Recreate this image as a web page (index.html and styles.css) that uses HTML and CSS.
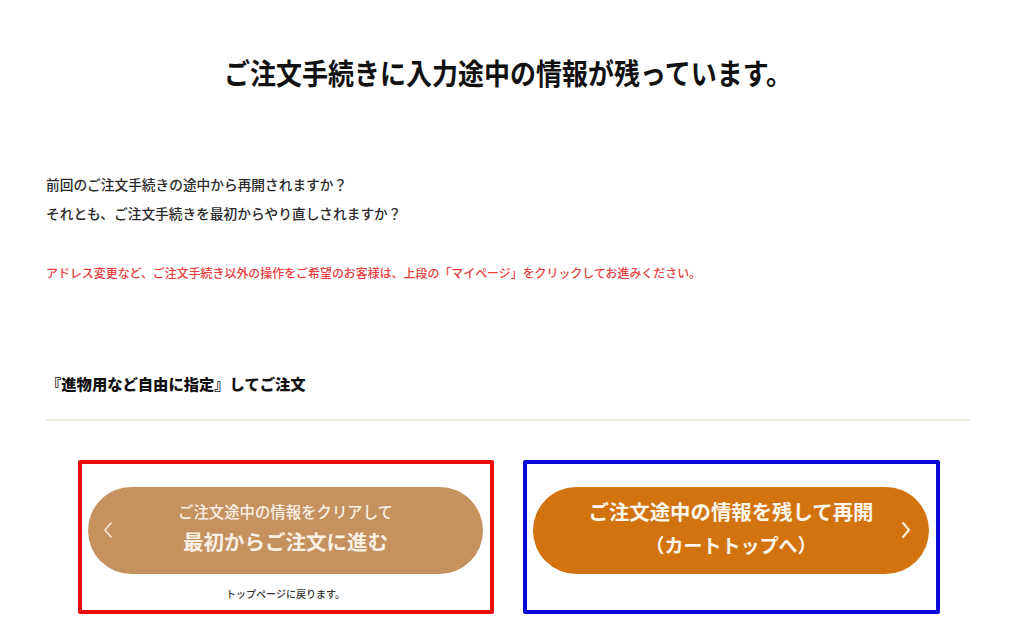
FILE: index.html
```html
<!DOCTYPE html>
<html lang="ja">
<head>
<meta charset="utf-8">
<title>ご注文手続き</title>
<link rel="stylesheet" href="styles.css">
</head>
<body>
<div class="page">
  <h1 class="title">ご注文手続きに入力途中の情報が残っています。</h1>
  <p class="lead">前回のご注文手続きの途中から再開されますか？<br>それとも、ご注文手続きを最初からやり直しされますか？</p>
  <p class="notice">アドレス変更など、ご注文手続き以外の操作をご希望のお客様は、上段の「マイページ」をクリックしてお進みください。</p>
  <h2 class="subhead">『進物用など自由に指定』してご注文</h2>
  <div class="rule"></div>
  <div class="actions">
    <div class="box box-red">
      <a class="btn btn-clear" href="#">
        <svg class="chev chev-left" width="10" height="18" viewBox="0 0 10 18"><polyline points="8,2 2,9 8,16" fill="none" stroke="#fbe9d6" stroke-width="1.6" stroke-linecap="round" stroke-linejoin="round"/></svg>
        <span class="l1">ご注文途中の情報をクリアして</span>
        <span class="l2">最初からご注文に進む</span>
      </a>
      <p class="caption">トップページに戻ります。</p>
    </div>
    <div class="box box-blue">
      <a class="btn btn-resume" href="#">
        <span class="r1">ご注文途中の情報を残して再開</span>
        <span class="r2">（カートトップへ）</span>
        <svg class="chev chev-right" width="10" height="18" viewBox="0 0 10 18"><polyline points="2,2 8,9 2,16" fill="none" stroke="#fff3e2" stroke-width="2" stroke-linecap="round" stroke-linejoin="round"/></svg>
      </a>
    </div>
  </div>
</div>
</body>
</html>
```
FILE: styles.css
```css
html, body {
  margin: 0;
  padding: 0;
  background: #ffffff;
}
body {
  font-family: "Noto Sans CJK JP", "Noto Sans", sans-serif;
  color: #222;
}
.page {
  padding: 0 48px 0 46px;
}
.title {
  margin: 0;
  padding-top: 52px;
  font-size: 26px;
  line-height: 36px;
  font-weight: 700;
  text-align: center;
  color: #111;
  transform: scaleY(1.12);
}
.lead {
  margin: 82px 0 0;
  font-size: 13.7px;
  line-height: 29px;
  font-weight: 500;
  color: #2a2a2a;
}
.notice {
  margin: 35px 0 0;
  font-size: 11.95px;
  line-height: 20px;
  font-weight: 500;
  color: #e8403f;
}
.subhead {
  margin: 88px 0 0;
  font-size: 15.3px;
  line-height: 24px;
  font-weight: 900;
  color: #111;
}
.rule {
  margin-top: 24px;
  height: 2px;
  background: #efebe2;
}
.actions {
  display: flex;
  gap: 29px;
  margin-top: 39px;
  padding-left: 32px;
}
.box {
  width: 416px;
  height: 154px;
  box-sizing: border-box;
  border: 4px solid;
  border-radius: 2px;
  padding: 23px 7px 0 6px;
}
.box-red { border-color: #ea0d0d; }
.box-blue { border-color: #0a0ad8; width: 417px; }
.btn {
  position: relative;
  display: flex;
  flex-direction: column;
  align-items: center;
  justify-content: center;
  height: 87px;
  border-radius: 44px;
  text-decoration: none;
  color: #fff;
  font-weight: 700;
}
.btn-clear {
  background: #c5915f;
  color: #fbf0e3;
}
.btn-resume {
  background: #d3730f;
  color: #fff7ec;
}
.l1 {
  font-size: 15.4px;
  line-height: 26px;
  font-weight: 500;
  margin-top: -6px;
}
.l2 {
  font-size: 20.5px;
  line-height: 34px;
}
.r1 {
  font-size: 20.4px;
  line-height: 34px;
  margin-top: -6px;
}
.r2 {
  font-size: 19px;
  line-height: 34px;
}
.chev {
  position: absolute;
  top: 34px;
}
.chev-left { left: 15px; }
.chev-right { right: 18px; }
.caption {
  margin: 12px 0 0;
  text-align: center;
  font-size: 10px;
  line-height: 16px;
  font-weight: 500;
  color: #333;
}
```
